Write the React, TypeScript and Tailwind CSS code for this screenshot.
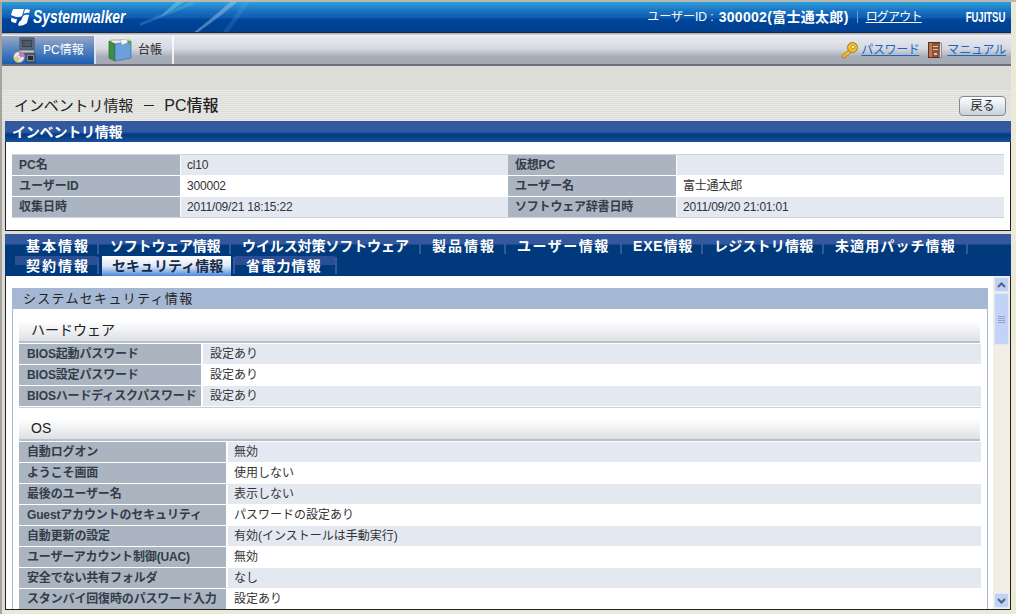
const jp = { fontFamily: '"Liberation Sans","Noto Sans CJK JP",sans-serif' };

const info = [
  ["PC名", "cl10", "仮想PC", ""],
  ["ユーザーID", "300002", "ユーザー名", "富士通太郎"],
  ["収集日時", "2011/09/21 18:15:22", "ソフトウェア辞書日時", "2011/09/20 21:01:01"],
];
const hw = [
  ["BIOS起動パスワード", "設定あり"],
  ["BIOS設定パスワード", "設定あり"],
  ["BIOSハードディスクパスワード", "設定あり"],
];
const os = [
  ["自動ログオン", "無効"],
  ["ようこそ画面", "使用しない"],
  ["最後のユーザー名", "表示しない"],
  ["Guestアカウントのセキュリティ", "パスワードの設定あり"],
  ["自動更新の設定", "有効(インストールは手動実行)"],
  ["ユーザーアカウント制御(UAC)", "無効"],
  ["安全でない共有フォルダ", "なし"],
  ["スタンバイ回復時のパスワード入力", "設定あり"],
];
const row1: [string, string][] = [
  ["基本情報", "w-[84px] tracking-[2px]"],
  ["ソフトウェア情報", "w-[132px] tracking-[-0.2px]"],
  ["ウイルス対策ソフトウェア", "w-[190px] tracking-[-0.1px]"],
  ["製品情報", "w-[85px] tracking-[2px]"],
  ["ユーザー情報", "w-[116px] tracking-[1.5px]"],
  ["EXE情報", "w-[81px] tracking-[0.8px]"],
  ["レジストリ情報", "w-[121px] tracking-[0.2px]"],
  ["未適用パッチ情報", "w-[144px] tracking-[1.1px]"],
];

function KeyIcon() {
  return (
    <svg width="17" height="17" viewBox="0 0 17 17" className="shrink-0">
      <path d="M8.5 7.5 L1 13.5 L2 16 L4.5 15.5 L5.2 13.8 L6.8 13.6 L10.5 10 Z" fill="#f0bc30" stroke="#a87c10" strokeWidth="0.9" />
      <circle cx="11.5" cy="5.5" r="5" fill="#eebc36" stroke="#a87c10" />
      <circle cx="12" cy="5" r="1.8" fill="#fff0b0" stroke="#b08414" strokeWidth="0.7" />
    </svg>
  );
}
function BookIcon() {
  return (
    <svg width="14" height="16" viewBox="0 0 14 16" className="shrink-0">
      <rect x="0.5" y="0.5" width="11" height="15" fill="#8f5238" stroke="#5c3020" />
      <rect x="11.5" y="1" width="2" height="14.5" fill="#e8e4d8" stroke="#444" strokeWidth="0.5" />
      <rect x="1" y="1" width="3" height="14" fill="#b87858" />
      <rect x="5" y="4" width="5" height="1" fill="#e0c8a8" />
      <rect x="5" y="7" width="5" height="1" fill="#e0c8a8" />
      <rect x="6" y="11" width="3" height="2" fill="#e0c8a8" />
    </svg>
  );
}
function PcIcon() {
  return (
    <svg width="23" height="26" viewBox="0 0 23 26" className="shrink-0">
      <path d="M7 1 H21 V12 H7 Z" fill="#7d8794" stroke="#3c4450" />
      <rect x="9" y="3" width="10" height="7" fill="#4a5868" stroke="#222a34" strokeWidth="0.8" />
      <path d="M6 13 H22 L21 16 H4 Z" fill="#c0c6ce" stroke="#4a525c" strokeWidth="0.8" />
      <rect x="13" y="17" width="9" height="8" fill="#7a828c" stroke="#333b45" />
      <rect x="15" y="19" width="5" height="4" fill="#242a32" />
      <circle cx="6" cy="20" r="5.5" fill="#dfe6ee" stroke="#79818c" strokeWidth="0.6" />
      <path d="M6 14.5 A5.5 5.5 0 0 1 11.5 20 H6 Z" fill="#d070c0" />
      <path d="M6 25.5 A5.5 5.5 0 0 1 0.5 20 H6 Z" fill="#e8d060" />
      <circle cx="6" cy="20" r="1.5" fill="#ffffff" stroke="#79818c" strokeWidth="0.5" />
    </svg>
  );
}
function LedgerIcon() {
  return (
    <svg width="24" height="24" viewBox="0 0 24 24" className="shrink-0">
      <path d="M3 2 H19 V7 H3 Z" fill="#e8eee8" stroke="#8a9a8a" strokeWidth="0.7" />
      <path d="M1 3 L7 6 V23 L1 20 Z" fill="#3c9040" stroke="#2a6a30" strokeWidth="0.7" />
      <path d="M7 6 L23 3 V20 L7 23 Z" fill="#6aa0dc" stroke="#3c6ca8" strokeWidth="0.7" />
      <path d="M12 2 L21 1 L23 3 L14 7 Z" fill="#f4f8f4" stroke="#9aa89a" strokeWidth="0.5" />
      <path d="M19 2 L23 3 V7 L20 6 Z" fill="#5aa050" />
    </svg>
  );
}
function LogoMark() {
  return (
    <svg width="19" height="17" viewBox="0 0 19 17" className="shrink-0">
      <path d="M2 0 H13 L11 7 C8 9 4 8 0 6 Z" fill="#fff" />
      <path d="M14 0.5 C16 0 18 0 19 1 L18 4 C16 3.5 14 4 12.5 5 Z" fill="#fff" />
      <path d="M12 7 C14 5.5 16 5.5 18 6 L16 14 C14 16 10 17 7 16.5 L8 13 C10 12 11 10 12 7 Z" fill="#fff" />
      <path d="M0.5 8.5 C2 9.5 4 10 6 10 L5 14 C3 14 1 13 0 12 Z" fill="#fff" />
    </svg>
  );
}
function Swoosh() {
  return (
    <svg width="140" height="31" viewBox="0 0 140 31" className="absolute left-[138px] top-0">
      <path d="M0 24 C20 16 40 8 57 1 L50 0 C30 9 15 15 0 21 Z" fill="#8fd0f0" fillOpacity="0.22" />
      <path d="M20 15 C30 10 38 4 44 0 L36 0 C30 5 25 10 20 15 Z" fill="#a0e4f8" fillOpacity="0.35" />
      <path d="M57 31 C72 20 86 10 97 0 L90 0 C78 11 66 21 53 31 Z" fill="#b8d8f4" fillOpacity="0.4" />
      <path d="M88 31 C95 20 103 10 110 0 L103 0 C97 10 90 21 82 31 Z" fill="#8fc8f0" fillOpacity="0.14" />
    </svg>
  );
}

function Tab({ label, cls, active, band }: { label: string; cls: string; active?: boolean; band?: boolean }) {
  return (
    <div className={`relative h-[20px] flex items-center shrink-0 ${active ? "pl-[13px]" : "pl-[11px]"} ${cls}`}>
      {active && <span className="absolute left-[3px] right-[4px] top-0 bottom-0 bg-gradient-to-b from-[#ffffff] via-[#dce8f8] to-[#4a88d8]" />}
      {band && <span className="absolute left-0 right-[2px] top-0 h-[9px] bg-[#2a4f94]" />}
      <span className={`relative text-[14px] font-bold leading-none whitespace-nowrap ${active ? "text-[#1a2a44]" : "text-white"}`}>
        {label}
      </span>
      <span className="absolute right-[0px] top-[1px] h-[17px] w-[2px] bg-[#33589c]" />
    </div>
  );
}

function KvRow({ k, v, idx, w, vp }: { k: string; v: string; idx: number; w: string; vp: string }) {
  return (
    <div className={`flex h-[21px] border-b border-[#ffffff] ${idx % 2 === 0 ? "bg-[#e4e9f1]" : "bg-white"}`}>
      <div className={`${w} shrink-0 bg-[#aab5c1] border-r-2 border-white pl-[8px] flex items-center text-[12px] font-bold text-[#333c48] whitespace-nowrap leading-none tracking-[-0.15px]`}>
        {k}
      </div>
      <div className={`${vp} flex items-center text-[12px] text-[#333] whitespace-nowrap leading-none`}>{v}</div>
    </div>
  );
}

function Heading({ text }: { text: string }) {
  return (
    <div className="h-[22px] mr-[1px] bg-gradient-to-b from-[#ffffff] to-[#dde0e4] border-b-2 border-[#b4c0cc] pl-[12px] flex items-end pb-[4px] text-[14px] text-[#222] leading-none">
      {text}
    </div>
  );
}

export default function App() {
  return (
    <div style={jp} className="w-[1016px] h-[614px] overflow-hidden bg-[#ece9d8] flex flex-col">
      <div className="h-[2px] shrink-0 bg-[#b9b9b2]" />
      <div className="flex h-[612px]">
        <div className="w-[2px] shrink-0 bg-[#a8a49c]" />
        <div className="w-[1009px] shrink-0 flex flex-col h-[608px] overflow-hidden bg-[#dcdcd8]">
          {/* Header */}
          <header className="relative shrink-0 h-[31px] overflow-hidden bg-[linear-gradient(to_bottom,#2f9fdc_0%,#1a72c0_30%,#0f5cae_52%,#00469c_58%,#003f8e_100%)] border-b border-[#1c2c48] flex items-center">
            <Swoosh />
            <div className="relative ml-[9px] flex items-center gap-[3px]">
              <LogoMark />
              <span className="text-white font-bold italic text-[18px] leading-none origin-left scale-x-[0.77]" style={{ fontFamily: '"Liberation Sans",sans-serif' }}>
                Systemwalker
              </span>
            </div>
            <div className="relative ml-auto flex items-center text-white text-[12px] leading-none">
              <span>ユーザーID : </span>
              <span className="font-bold ml-[5px] text-[14px] tracking-[0.3px]">300002(富士通太郎)</span>
              <span className="mx-[8px] h-[12px] w-px bg-[#7ba0cc]" />
              <span className="underline tracking-[-0.8px]">ログアウト</span>
              <span className="ml-[25px] mr-[6px] font-bold text-[14px] origin-right scale-x-[0.68]" style={{ fontFamily: '"Liberation Sans",sans-serif' }}>
                FUJITSU
              </span>
            </div>
          </header>
          <div className="h-[3px] shrink-0 bg-[linear-gradient(to_bottom,#9aa0a8,#ffffff)]" />
          {/* Nav */}
          <nav className="shrink-0 h-[30px] flex items-stretch bg-[linear-gradient(to_bottom,#e8eaf0_0%,#d6d9e0_45%,#a6acb6_75%,#a4aab4_100%)] border-b-2 border-[#6a707a]">
            <div className="w-[94px] flex items-center pl-[11px] gap-[7px] bg-[linear-gradient(to_bottom,#98a8c4_0%,#5a86c0_45%,#1a5cb0_100%)] border-r-2 border-white/80 text-white text-[12px]">
              <PcIcon />
              <span>PC情報</span>
            </div>
            <div className="w-[78px] flex items-center pl-[12px] gap-[6px] border-r-2 border-white/80 text-[#222] text-[12px]">
              <LedgerIcon />
              <span>台帳</span>
            </div>
            <div className="ml-auto flex items-center pr-[5px] text-[12px] text-[#1c66c4] leading-none">
              <KeyIcon />
              <span className="underline ml-[3px] tracking-[-0.4px]">パスワード</span>
              <span className="ml-[9px]"><BookIcon /></span>
              <span className="underline ml-[5px] tracking-[-0.2px]">マニュアル</span>
            </div>
          </nav>
          <div className="h-[24px] shrink-0 bg-[#dcdcd8]" />
          {/* Title area */}
          <div className="h-[31px] shrink-0 bg-[repeating-linear-gradient(to_bottom,#e8e8e4_0px,#e8e8e4_1px,#dededa_1px,#dededa_2px)] flex items-center justify-between pl-[12px] pr-[5px]">
            <h1 className="text-[15px] text-[#222] leading-none whitespace-nowrap flex items-center">
              <span className="tracking-[-0.1px]">インベントリ情報</span>
              <span className="ml-[11px] w-[10px] h-px bg-[#222]" />
              <span className="ml-[10px] text-[16px] font-medium">PC情報</span>
            </h1>
            <button className="w-[47px] h-[20px] rounded-[4px] border border-[#7f8a96] bg-gradient-to-b from-[#ffffff] to-[#c8d0dc] text-[12px] text-[#222] leading-none">戻る</button>
          </div>

          <div className="pl-[3px] flex flex-col flex-1 min-h-0">
            {/* Inventory panel */}
            <div className="shrink-0 h-[21px] bg-[linear-gradient(to_bottom,#34589e_0%,#2f5aa0_50%,#003a84_65%,#1a5098_100%)] pl-[7px] flex items-center text-white font-bold text-[14px] tracking-[-0.2px] leading-none">
              インベントリ情報
            </div>
            <div className="shrink-0 h-[89px] bg-white border-x border-b border-[#222] pt-[12px] px-[6px]">
              <div className="border-t border-b border-[#ccd2da]">
                {info.map((r, i) => (
                  <div key={i} className={`flex ${i < 2 ? "h-[21px] border-b border-white" : "h-[20px]"} ${i % 2 === 0 ? "bg-[#e4e9f1]" : "bg-white"}`}>
                    <div className="w-[169px] shrink-0 bg-[#aab5c1] border-r border-white pl-[7px] flex items-center text-[12px] font-bold text-[#333c48] leading-none whitespace-nowrap">{r[0]}</div>
                    <div className="w-[327px] shrink-0 pl-[6px] flex items-center text-[12px] tracking-[-0.2px] text-[#333] leading-none whitespace-nowrap">{r[1]}</div>
                    <div className="w-[169px] shrink-0 bg-[#aab5c1] border-r border-white pl-[7px] flex items-center text-[12px] font-bold text-[#333c48] tracking-[-0.2px] leading-none whitespace-nowrap">{r[2]}</div>
                    <div className="flex-1 pl-[6px] flex items-center text-[12px] tracking-[-0.2px] text-[#333] leading-none whitespace-nowrap">{r[3]}</div>
                  </div>
                ))}
              </div>
            </div>
            <div className="h-[3px] shrink-0" />
            {/* Tabs */}
            <div className="shrink-0 h-[42px] bg-[#003a7c]">
              <div className="flex h-[21px] items-center pt-[2px] pl-[10px] bg-[linear-gradient(to_bottom,#33589e_0px,#33589e_10px,#003a7c_11px,#003a7c_100%)]">
                {row1.map(([l, c]) => <Tab key={l} label={l} cls={c} />)}
              </div>
              <div className="flex h-[21px] items-center pl-[10px]">
                <Tab label="契約情報" cls="w-[84px] tracking-[2px]" band />
                <Tab label="セキュリティ情報" cls="w-[136px] tracking-[0px]" active />
                <Tab label="省電力情報" cls="w-[102px] tracking-[1.2px]" band />
              </div>
            </div>
            {/* Scroll area */}
            <div className="flex flex-1 min-h-0 bg-white border-x border-b border-[#222]">
              <div className="flex-1 min-w-0 overflow-hidden pl-[6px] pr-[5px] pt-[12px]">
                <div className="h-[21px] bg-[#a5b8d3] pl-[11px] flex items-center text-[13px] text-[#222] leading-none tracking-[1.3px]">システムセキュリティ情報</div>
                <div className="border-x border-x-[#a5b8d3] px-[6px] pt-[12px]">
                  <Heading text="ハードウェア" />
                  <div className="border-b border-[#c8ced6] mt-[1px]">
                    {hw.map((r, i) => <KvRow key={i} k={r[0]} v={r[1]} idx={i} w="w-[184px]" vp="pl-[7px]" />)}
                  </div>
                  <div className="h-[11px]" />
                  <Heading text="OS" />
                  <div className="mt-[1px]">
                    {os.map((r, i) => <KvRow key={i} k={r[0]} v={r[1]} idx={i} w="w-[209px]" vp="pl-[6px]" />)}
                  </div>
                </div>
              </div>
              {/* Scrollbar */}
              <div className="w-[17px] shrink-0 bg-[#f1efe4] pt-[1px] flex flex-col items-center">
                <div className="w-[15px] h-[15px] rounded-[2px] bg-[#c0d2f4] border border-[#e0e8f8] flex items-center justify-center">
                  <svg width="9" height="6" viewBox="0 0 9 6"><path d="M1 5 L4.5 1.5 L8 5" fill="none" stroke="#4d6185" strokeWidth="2" /></svg>
                </div>
                <div className="mt-[1px] w-[15px] h-[52px] rounded-[2px] bg-[#c3d3f7] border border-[#e0e8f8] flex flex-col items-center justify-center gap-[1px]">
                  <span className="w-[7px] h-px bg-[#8ea4cc]" />
                  <span className="w-[7px] h-px bg-[#8ea4cc]" />
                  <span className="w-[7px] h-px bg-[#8ea4cc]" />
                  <span className="w-[7px] h-px bg-[#8ea4cc]" />
                </div>
                <div className="mt-auto mb-[1px] w-[15px] h-[15px] rounded-[2px] bg-[#c0d2f4] border border-[#e0e8f8] flex items-center justify-center">
                  <svg width="9" height="6" viewBox="0 0 9 6"><path d="M1 1 L4.5 4.5 L8 1" fill="none" stroke="#4d6185" strokeWidth="2" /></svg>
                </div>
              </div>
            </div>
          </div>
        </div>
        <div className="w-[5px] shrink-0" />
      </div>
    </div>
  );
}
